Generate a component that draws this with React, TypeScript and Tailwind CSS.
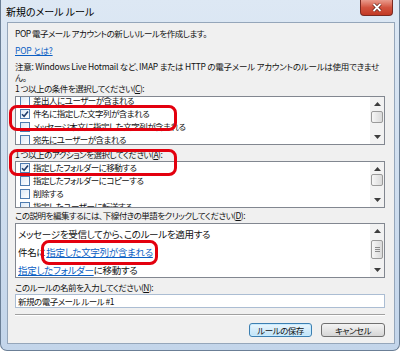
import React from 'react';

const font = "font-['Noto_Sans_CJK_JP',sans-serif] [font-feature-settings:'palt']";

function CheckBox({ checked }: { checked?: boolean }) {
    return (
        <span className="w-[10px] h-[10px] shrink-0 border border-[#4f7cb0] bg-gradient-to-br from-[#dce8f5] to-white flex items-center justify-center">
            {checked && (
                <svg width="8" height="8" viewBox="0 0 8 8">
                    <path d="M1 4.2 L3.1 6.3 L7 1.4" fill="none" stroke="#1f3f6e" strokeWidth="1.6" />
                </svg>
            )}
        </span>
    );
}

function Arrow({ up }: { up?: boolean }) {
    return (
        <div className="h-[14px] flex items-center justify-center">
            <svg width="7" height="4" viewBox="0 0 7 4">
                <path d={up ? 'M0 4 L3.5 0 L7 4 Z' : 'M0 0 L3.5 4 L7 0 Z'} fill="#3d3d3d" />
            </svg>
        </div>
    );
}

function ScrollBar({ thumbTop, thumbH, grip }: { thumbTop: number; thumbH: number; grip?: boolean }) {
    return (
        <div className="w-[14px] h-full shrink-0 bg-[#f2f2f2] flex flex-col justify-between relative">
            <Arrow up />
            <div
                className="absolute left-[1px] w-[12px] rounded-[2px] border border-[#9a9a9a] bg-gradient-to-r from-[#f6f6f6] to-[#dadada] flex flex-col items-center justify-center gap-[1px]"
                style={{ top: thumbTop, height: thumbH }}
            >
                {grip && (
                    <>
                        <span className="w-[5px] h-px bg-[#8a8a8a]" />
                        <span className="w-[5px] h-px bg-[#8a8a8a]" />
                        <span className="w-[5px] h-px bg-[#8a8a8a]" />
                    </>
                )}
            </div>
            <Arrow />
        </div>
    );
}

function Row({ label, checked }: { label: string; checked?: boolean }) {
    return (
        <div className="h-[13px] flex items-center gap-[3px] pl-[4px] whitespace-nowrap">
            <CheckBox checked={checked} />
            <span>{label}</span>
        </div>
    );
}

function Link({ children }: { children: React.ReactNode }) {
    return <span className="text-[#0b5fc4] underline underline-offset-1">{children}</span>;
}

export default function App() {
    return (
        <div className={`w-[400px] h-[351px] relative overflow-hidden bg-gradient-to-b from-[#dde8f4] to-[#c3d5ea] border-x border-b border-[#6b7f96] rounded-b-[7px] text-[8.5px] tracking-[-0.5px] text-[#111] ${font}`}>
            <div className="h-[22px] pl-[5px] flex items-center text-[10px] tracking-normal text-black">新規のメール ルール</div>

            <div className="absolute top-0 right-[6px] w-[33px] h-[16px] rounded-b-[4px] border border-t-0 border-[#7a2a22] bg-gradient-to-b from-[#e99a8c] via-[#d2533f] to-[#c23a25] flex items-center justify-center">
                <svg width="10" height="9" viewBox="0 0 10 9">
                    <path d="M1.5 1 L8.5 8 M8.5 1 L1.5 8" stroke="#5a1c14" strokeWidth="3.2" />
                    <path d="M1.5 1 L8.5 8 M8.5 1 L1.5 8" stroke="#fff" strokeWidth="1.8" />
                </svg>
            </div>

            <div className="ml-[6px] w-[388px] h-[322px] border border-[#95a6ba] bg-[#f0f0f0] pl-[7px] pr-[9px] pt-[4px] flex flex-col">
                <div className="h-[13px] leading-[13px] whitespace-nowrap">POP 電子メール アカウントの新しいルールを作成します。</div>
                <div className="h-[13px] leading-[13px] mt-[4px] tracking-[-0.2px]">
                    <Link>POP とは?</Link>
                </div>
                <div className="mt-[4px] leading-[11px] whitespace-nowrap tracking-[-0.25px]">
                    注意: Windows Live Hotmail など、IMAP または HTTP の電子メール アカウントのルールは使用できませ
                    <br />
                    ん。
                </div>
                <div className="leading-[11px] h-[11px] whitespace-nowrap">1 つ以上の条件を選択してください(<span className="underline">C</span>):</div>

                <div className="mt-[2px] h-[49px] border border-[#828790] bg-white flex overflow-hidden">
                    <div className="flex-1 overflow-hidden">
                        <div className="-mt-[3px]">
                            <Row label="差出人にユーザーが含まれる" />
                            <Row label="件名に指定した文字列が含まれる" checked />
                            <Row label="メッセージ本文に指定した文字列が含まれる" />
                            <Row label="宛先にユーザーが含まれる" />
                        </div>
                    </div>
                    <ScrollBar thumbTop={14} thumbH={12} />
                </div>

                <div className="mt-[4px] leading-[11px] h-[11px] whitespace-nowrap">1 つ以上のアクションを選択してください(<span className="underline">A</span>):</div>

                <div className="mt-[1px] h-[47px] border border-[#828790] bg-white flex overflow-hidden">
                    <div className="flex-1 overflow-hidden">
                        <div className="-mt-[1px]">
                            <Row label="指定したフォルダーに移動する" checked />
                            <Row label="指定したフォルダーにコピーする" />
                            <Row label="削除する" />
                            <Row label="指定したユーザーに転送する" />
                        </div>
                    </div>
                    <ScrollBar thumbTop={12} thumbH={12} />
                </div>

                <div className="mt-[2px] leading-[11px] h-[11px] whitespace-nowrap">この説明を編集するには、下線付きの単語をクリックしてください(<span className="underline">D</span>):</div>

                <div className="mt-[2px] h-[55px] border border-[#828790] bg-white flex overflow-hidden">
                    <div className="flex-1 pl-[2px] pt-[1px] leading-[18px] whitespace-nowrap text-[9.5px] tracking-[-0.3px]">
                        <div>メッセージを受信してから、このルールを適用する</div>
                        <div>
                            件名に<span className="ml-[1px]"><Link>指定した文字列が含まれる</Link></span>
                        </div>
                        <div>
                            <Link>指定したフォルダー</Link>に移動する
                        </div>
                    </div>
                    <ScrollBar thumbTop={16} thumbH={19} grip />
                </div>

                <div className="mt-[4px] leading-[11px] h-[11px] whitespace-nowrap">このルールの名前を入力してください(<span className="underline">N</span>):</div>

                <div className="mt-[1px] h-[14px] border border-[#abbdd3] bg-white pl-[2px] flex items-center whitespace-nowrap">新規の電子メール ルール #1</div>

                <div className="mt-[6px] border-t border-[#a0a0a0] border-b border-b-white" />

                <div className="mt-[7px] flex justify-end gap-[9px]">
                    <button className="w-[63px] h-[14px] rounded-[3px] border border-[#3c7fb1] bg-gradient-to-b from-[#eaf6fd] to-[#bfe3f8] shadow-[inset_0_0_0_1px_#c8ebff] flex items-center justify-center leading-none">
                        ルールの保存
                    </button>
                    <button className="w-[64px] h-[14px] rounded-[3px] border border-[#707070] bg-gradient-to-b from-[#f4f4f4] to-[#d6d6d6] flex items-center justify-center leading-none">
                        キャンセル
                    </button>
                </div>
            </div>

            <div className="pointer-events-none absolute left-[8px] top-[105px] w-[168px] h-[26px] rounded-[8px] border-[3px] border-[#e3000e]" />
            <div className="pointer-events-none absolute left-[8px] top-[149px] w-[168px] h-[27px] rounded-[8px] border-[3px] border-[#e3000e]" />
            <div className="pointer-events-none absolute left-[40px] top-[240px] w-[117px] h-[25px] rounded-[8px] border-[3px] border-[#e3000e]" />
        </div>
    );
}
